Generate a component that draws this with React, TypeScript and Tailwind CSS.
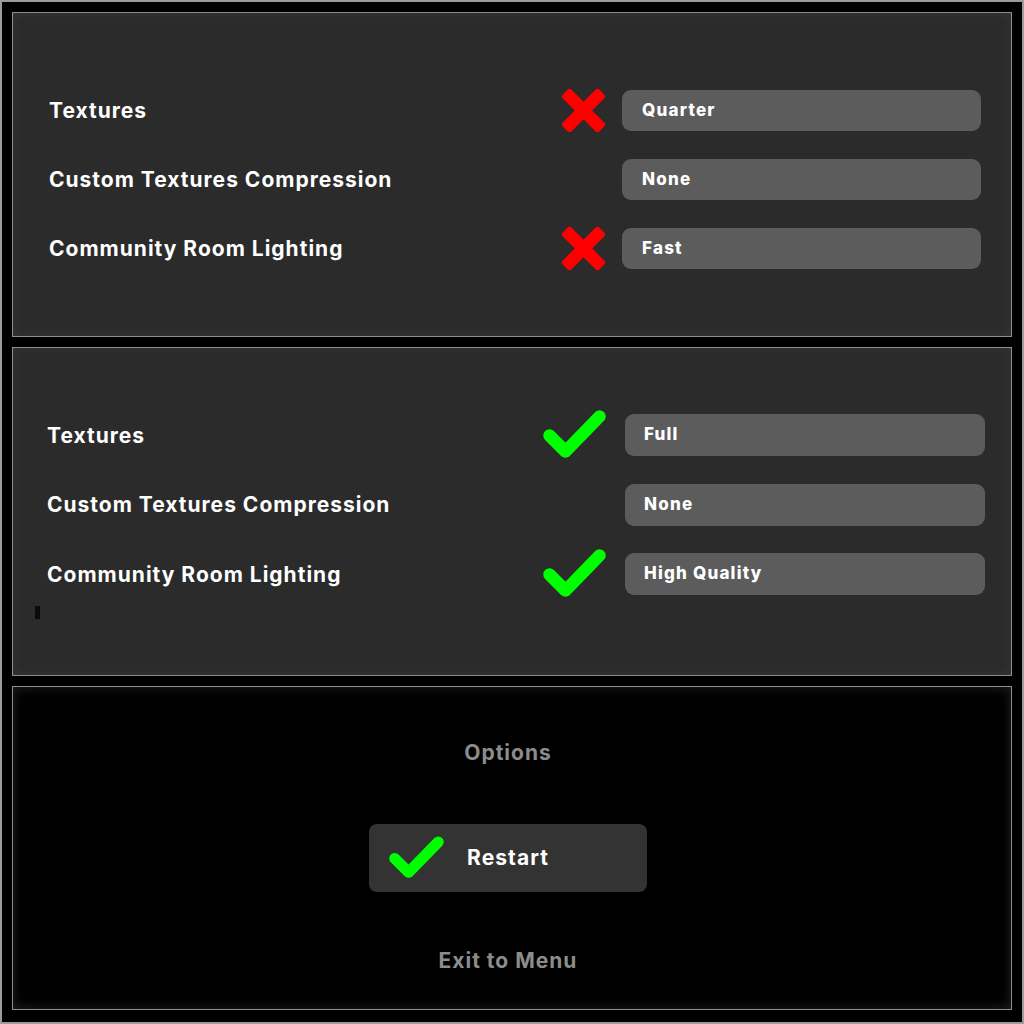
import React from "react";

const font = { fontFamily: "Inter, 'Liberation Sans', sans-serif" };

function XIcon() {
  return (
    <svg width="45" height="45" viewBox="0 0 45 45" className="shrink-0">
      <g transform="translate(22.5 22.5)">
        <rect x="-26" y="-6.2" width="52" height="12.4" rx="3" fill="#ff0000" transform="rotate(45)" />
        <rect x="-26" y="-6.2" width="52" height="12.4" rx="3" fill="#ff0000" transform="rotate(-45)" />
      </g>
    </svg>
  );
}

function Check({ w = 63, h = 50 }: { w?: number; h?: number }) {
  return (
    <svg width={w} height={h} viewBox="0 0 63 50" className="shrink-0">
      <polyline
        points="6.5,25.5 22.5,41.5 56.5,6.5"
        fill="none"
        stroke="#00ff00"
        strokeWidth="12.5"
        strokeLinecap="round"
        strokeLinejoin="round"
      />
    </svg>
  );
}

type Row = { label: string; value: string; mark: "x" | "check" | null };

function Panel1() {
  const rows: Row[] = [
    { label: "Textures", value: "Quarter", mark: "x" },
    { label: "Custom Textures Compression", value: "None", mark: null },
    { label: "Community Room Lighting", value: "Fast", mark: "x" },
  ];
  return (
    <div className="h-[325px] border border-[#8e8e8e] bg-[#2b2b2b] shadow-[inset_0_0_8px_rgba(255,255,255,0.06)] pt-[77px] pl-[36px] pr-[30px] flex flex-col gap-[28px]">
      {rows.map((r) => (
        <div key={r.label} className="flex items-center h-[41px]">
          <div className="flex-1 text-white font-bold text-[21px] leading-none tracking-[1px]" style={font}>
            {r.label}
          </div>
          <div className="w-[45px] h-[45px] flex items-center justify-center">
            {r.mark === "x" ? <XIcon /> : null}
          </div>
          <div className="ml-[16px] w-[359px] h-[41px] rounded-[9px] bg-[#5c5c5c] flex items-center pl-[20px] text-white font-extrabold text-[17px] tracking-[1.2px]" style={font}>
            {r.value}
          </div>
        </div>
      ))}
    </div>
  );
}

function Panel2() {
  const rows: Row[] = [
    { label: "Textures", value: "Full", mark: "check" },
    { label: "Custom Textures Compression", value: "None", mark: null },
    { label: "Community Room Lighting", value: "High Quality", mark: "check" },
  ];
  return (
    <div className="relative h-[329px] border border-[#8e8e8e] bg-[#2b2b2b] shadow-[inset_0_0_8px_rgba(255,255,255,0.06)] pt-[66px] pl-[34px] pr-[26px] flex flex-col gap-[27.5px]">
      {rows.map((r) => (
        <div key={r.label} className="flex items-center h-[42px]">
          <div className="flex-1 text-white font-bold text-[21px] leading-none tracking-[1px]" style={font}>
            {r.label}
          </div>
          <div className="w-[63px] h-[50px] flex items-center justify-center">
            {r.mark === "check" ? <Check /> : null}
          </div>
          <div className="ml-[19px] w-[360px] h-[42px] rounded-[9px] bg-[#5c5c5c] flex items-center pl-[19px] text-white font-extrabold text-[17px] tracking-[1.2px]" style={font}>
            {r.value}
          </div>
        </div>
      ))}
      <div className="absolute left-[22px] top-[258px] w-[5px] h-[13px] bg-[#0a0a0a]" />
    </div>
  );
}

function Panel3() {
  return (
    <div className="h-[324px] border border-[#8e8e8e] bg-black shadow-[inset_0_0_12px_rgba(255,255,255,0.14)] flex flex-col items-center pr-[8px] pt-[54px]">
      <div className="h-[24px] leading-[24px] text-[#8c8c8c] font-bold text-[21px] tracking-[1px]" style={font}>
        Options
      </div>
      <div className="mt-[59px] w-[278px] h-[68px] rounded-[8px] bg-[#333333] flex items-center pl-[20px]">
        <Check w={55} h={44} />
        <span className="ml-[23px] text-white font-bold text-[21px] tracking-[1.1px]" style={font}>
          Restart
        </span>
      </div>
      <div className="mt-[57px] h-[24px] leading-[24px] text-[#8c8c8c] font-bold text-[21px] tracking-[1px]" style={font}>
        Exit to Menu
      </div>
    </div>
  );
}

export default function App() {
  return (
    <div className="w-[1024px] h-[1024px] border-2 border-[#9c9c9c] bg-black p-[10px] flex flex-col gap-[10px]">
      <Panel1 />
      <Panel2 />
      <Panel3 />
    </div>
  );
}
